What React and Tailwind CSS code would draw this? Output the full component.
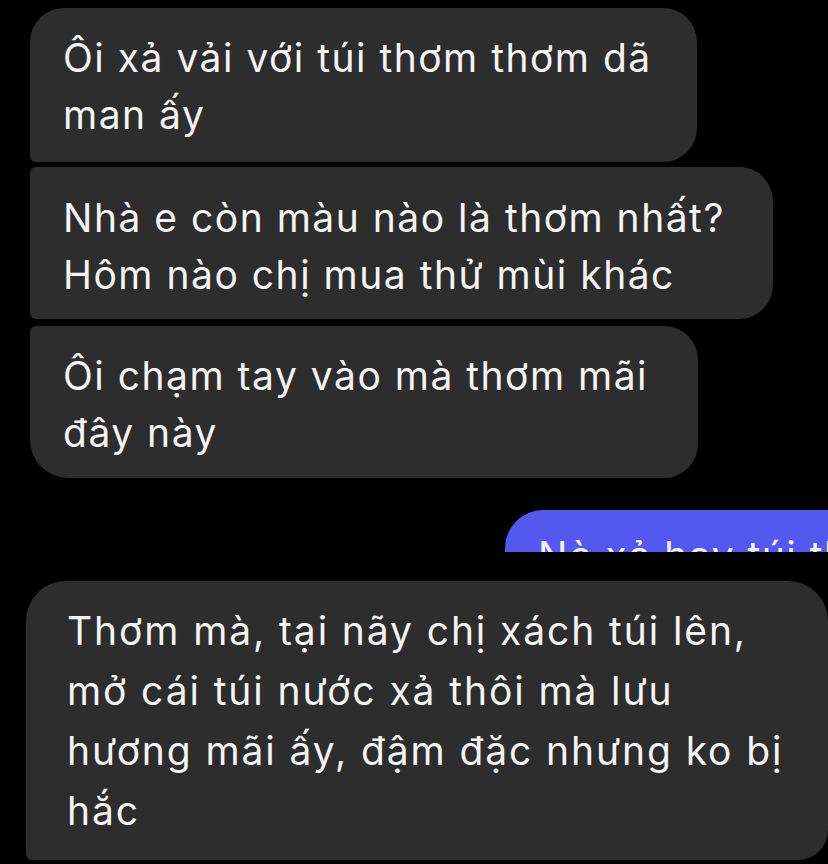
export default function App() {
  const font = { fontFamily: "Inter, 'Noto Sans', sans-serif" };
  return (
    <div className="w-[828px] h-[864px] bg-black overflow-hidden flex flex-col text-[#f4f4f4] text-[39px] tracking-[1.5px]" style={font}>
      <div className="mt-[8px] ml-[30px] w-[667px] h-[154px] shrink-0 bg-[#2d2d2d] rounded-tl-[34px] rounded-tr-[34px] rounded-br-[34px] rounded-bl-[6px] pl-[33px] pt-[21px] leading-[57px]">
        Ôi xả vải với túi thơm thơm dã<br />man ấy
      </div>
      <div className="mt-[5px] ml-[30px] w-[743px] h-[152px] shrink-0 bg-[#2d2d2d] rounded-tl-[6px] rounded-tr-[34px] rounded-br-[34px] rounded-bl-[6px] pl-[33px] pt-[22px] leading-[57px]">
        Nhà e còn màu nào là thơm nhất?<br />Hôm nào chị mua thử mùi khác
      </div>
      <div className="mt-[7px] ml-[30px] w-[668px] h-[152px] shrink-0 bg-[#2d2d2d] rounded-tl-[6px] rounded-tr-[34px] rounded-br-[34px] rounded-bl-[38px] pl-[33px] pt-[21px] leading-[57px]">
        Ôi chạm tay vào mà thơm mãi<br />đây này
      </div>
      <div className="mt-[32px] ml-[505px] w-[420px] h-[42px] shrink-0 bg-[#5558ef] rounded-tl-[38px] overflow-hidden pl-[33px] pt-[17px] leading-[57px] whitespace-nowrap">
        Nè xả hay túi thì
      </div>
      <div className="mt-[29px] ml-[26px] w-[802px] h-[279px] shrink-0 bg-[#2d2d2d] rounded-tl-[40px] rounded-tr-[40px] rounded-br-[30px] rounded-bl-[6px] pl-[41px] pt-[20px] leading-[60px] tracking-[1.9px]">
        Thơm mà, tại nãy chị xách túi lên,<br />mở cái túi nước xả thôi mà lưu<br />hương mãi ấy, đậm đặc nhưng ko bị<br />hắc
      </div>
    </div>
  );
}
